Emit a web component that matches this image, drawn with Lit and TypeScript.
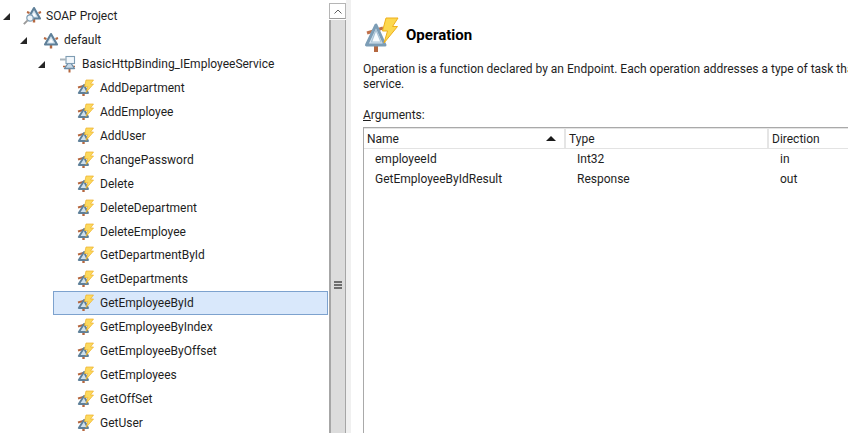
import { LitElement, html, css, svg } from "lit";
import { customElement } from "lit/decorators.js";

const triangle = svg`
  <path d="M1 6 L3.5 7 M12.5 7 L15 6" stroke="#b5673f" stroke-width="2" fill="none"/>
  <path d="M8 12 V16.5" stroke="#b5673f" stroke-width="2.4" fill="none"/>
  <path d="M8 2 L14 12.5 H2 Z" fill="#cfe0ec" stroke="#5f8099" stroke-width="2.1" stroke-linejoin="round"/>
  <path d="M8 6.6 L10.2 10.6 H5.8 Z" fill="#ffffff"/>`;

const opIcon = html`<svg class="icon" viewBox="0 0 18 18" width="18" height="18">
  <path d="M1 8.5 L9 6.2" stroke="#b5673f" stroke-width="1.9" fill="none"/>
  <path d="M6.5 13 V17" stroke="#b5673f" stroke-width="2.4" fill="none"/>
  <path d="M7 6 L1.8 14 H11 Z" fill="#cfe0ec" stroke="#5f8099" stroke-width="1.9" stroke-linejoin="round"/>
  <path d="M9 1 H16.5 L13.5 5 H16.5 L9 13.5 L10.8 7.5 H7.5 Z" fill="#fcd95e" stroke="#eeb02a" stroke-width=".7"/>
</svg>`;

const bigOp = html`<svg class="big" viewBox="0 0 36 36" width="36" height="36">
  <path d="M3 17 L19 12" stroke="#c0704a" stroke-width="3" fill="none"/>
  <path d="M12 29 V36" stroke="#b5673f" stroke-width="4" fill="none"/>
  <path d="M12 9 L2.5 29 H21 Z" fill="#d7e5f0" stroke="#7c9db6" stroke-width="3" stroke-linejoin="round"/>
  <path d="M12 14 L7.5 26 H17 Z" fill="#f7fbfe" stroke="#a9c3d6" stroke-width="1.2"/>
  <path d="M22 2 H34 L28.5 10.5 H33.5 L20 27 L23.5 15 H18.5 Z" fill="#fcd84f" stroke="#eeae1c" stroke-width="1"/>
</svg>`;

const projectIcon = html`<svg class="icon" viewBox="0 0 20 20" width="20" height="20">
  <g transform="translate(3,0)">${triangle}</g>
  <circle cx="7" cy="12" r="3.2" fill="#eef5fa" stroke="#7f9db3" stroke-width="1.2"/>
  <path d="M4.6 14.4 L0.8 18.2" stroke="#9a9a9a" stroke-width="1.9"/>
</svg>`;

const defaultIcon = html`<svg class="icon" viewBox="0 0 16 17" width="16" height="17">${triangle}</svg>`;

const bindingIcon = html`<svg class="icon" viewBox="0 0 18 18" width="18" height="18">
  <path d="M3 11.5 H15" stroke="#b5673f" stroke-width="1.5"/>
  <path d="M9.5 13 V17.5" stroke="#b5673f" stroke-width="2"/>
  <path d="M9.5 6 L14.5 13.5 H4.5 Z" fill="#c7d9e7" stroke="#6d8da6" stroke-width="1.3" stroke-linejoin="round"/>
  <rect x="6" y="1.5" width="8.5" height="7" fill="#f2f7fb" stroke="#7f9db3" stroke-width="1.1"/>
  <path d="M0 4.5 H6" stroke="#a9b4bc" stroke-width="2"/>
</svg>`;

const ops = [
  "AddDepartment", "AddEmployee", "AddUser", "ChangePassword", "Delete",
  "DeleteDepartment", "DeleteEmployee", "GetDepartmentById", "GetDepartments",
  "GetEmployeeById", "GetEmployeeByIndex", "GetEmployeeByOffset", "GetEmployees",
  "GetOffSet", "GetUser",
];

const expander = html`<svg class="exp" viewBox="0 0 7 7" width="7" height="7"><path d="M0 7 H7 V0 Z" fill="#262626"/></svg>`;

@customElement("app-root")
export class AppRoot extends LitElement {
  static styles = css`
    :host {
      display: flex;
      width: 848px;
      height: 433px;
      overflow: hidden;
      background: #fff;
      font-family: "Roboto", "Noto Sans", sans-serif;
      font-size: 12px;
      color: #1e1e1e;
    }
    .tree {
      width: 329px;
      flex: none;
      padding-top: 4.6px;
      box-sizing: border-box;
      overflow: hidden;
    }
    .row {
      display: flex;
      align-items: center;
      height: 23.9px;
      white-space: nowrap;
      box-sizing: border-box;
    }
    .exp { flex: none; }
    .l0 { padding-left: 3px; padding-bottom: 1px; }
    .l1 { padding-left: 20px; }
    .l2 { padding-left: 38px; }
    .l3 { padding-left: 77px; }
    .row .icon { flex: none; margin-right: 5px; }
    .l0 .exp { margin-right: 13px; }
    .l0 .icon { margin-right: 3px; }
    .l1 .exp { margin-right: 16px; }
    .l1 .icon { margin-right: 5px; }
    .l2 .exp { margin-right: 15px; }
    .l2 .icon { margin-right: 4px; }
    .row.sel {
      margin-left: 53px;
      width: 275px;
      background: #d9e8fb;
      border: 1px solid #7da2ce;
      padding-left: 23px;
    }
    .scroll {
      width: 17px;
      flex: none;
      display: flex;
      flex-direction: column;
      padding-top: 3px;
      box-sizing: border-box;
    }
    .sb-btn {
      height: 16px;
      border: 1px solid #b5b5b5;
      border-bottom: 1px solid #9c9c9c;
      box-sizing: border-box;
      background: #fff;
      display: flex;
      align-items: center;
      justify-content: center;
    }
    .thumb {
      flex: 1;
      background: #dcdcdc;
      border-left: 2px solid #a6a6a6;
      border-right: 1px solid #a6a6a6;
      display: flex;
      align-items: center;
      justify-content: center;
      margin-top: 1px;
      padding-top: 116px;
      box-sizing: border-box;
    }
    .grip { display: flex; flex-direction: column; gap: 1px; }
    .grip i { display: block; width: 8px; height: 2px; background: #6e6e6e; }
    .strip { width: 5px; flex: none; background: #f0f0f0; }
    .main {
      flex: 1;
      min-width: 0;
      padding: 15px 0 0 12px;
      display: flex;
      flex-direction: column;
      overflow: hidden;
    }
    .head { display: flex; align-items: center; gap: 6px; height: 38px; margin-left: 1px; }
    .title { font-size: 15px; font-weight: 700; color: #000; margin-top: 1px; }
    .desc { margin: 9px 0 0; line-height: 15px; }
    .desc span { white-space: nowrap; display: block; }
    .args { margin-top: 15px; line-height: 16px; }
    .args u { text-decoration: underline; }
    .table {
      margin-top: 4px;
      flex: 1;
      width: 600px;
      border: 1px solid #a9a9a9;
      border-right: none;
      border-bottom: none;
      box-sizing: border-box;
    }
    .thead {
      display: grid;
      grid-template-columns: 202px 203px 1fr;
      height: 21px;
      border-top: 1px solid #e4e4e4;
      border-bottom: 1px solid #e3e3e3;
      box-sizing: border-box;
    }
    .th {
      display: flex;
      align-items: center;
      justify-content: space-between;
      padding: 0 8px 0 3px;
      border-right: 2px solid #e5e5e5;
      box-sizing: border-box;
    }
    .th:last-child { border-right: none; }
    .arrow { width: 0; height: 0; border: 5px solid transparent; border-top: 0; border-bottom: 5px solid #1a1a1a; }
    .tr {
      display: grid;
      grid-template-columns: 202px 203px 1fr;
      height: 20px;
      align-items: center;
    }
    .tr > div { padding-left: 11px; white-space: nowrap; }
  `;

  render() {
    return html`
      <div class="tree">
        <div class="row l0">${expander}${projectIcon}<span>SOAP Project</span></div>
        <div class="row l1">${expander}${defaultIcon}<span>default</span></div>
        <div class="row l2">${expander}${bindingIcon}<span>BasicHttpBinding_IEmployeeService</span></div>
        ${ops.map(
          (o) => html`<div class="row l3 ${o === "GetEmployeeById" ? "sel" : ""}">${opIcon}<span>${o}</span></div>`
        )}
      </div>
      <div class="scroll">
        <div class="sb-btn">
          <svg viewBox="0 0 8 5" width="8" height="5"><path d="M.5 4.5 L4 1 L7.5 4.5" fill="none" stroke="#606060" stroke-width="1"/></svg>
        </div>
        <div class="thumb"><div class="grip"><i></i><i></i><i></i></div></div>
      </div>
      <div class="strip"></div>
      <div class="main">
        <div class="head">${bigOp}<span class="title">Operation</span></div>
        <div class="desc">
          <span>Operation is a function declared by an Endpoint. Each operation addresses a type of task that can be performed by the</span>
          <span>service.</span>
        </div>
        <div class="args"><u>A</u>rguments:</div>
        <div class="table">
          <div class="thead">
            <div class="th">Name<span class="arrow"></span></div>
            <div class="th">Type</div>
            <div class="th">Direction</div>
          </div>
          <div>
            <div class="tr"><div>employeeId</div><div>Int32</div><div>in</div></div>
            <div class="tr"><div>GetEmployeeByIdResult</div><div>Response</div><div>out</div></div>
          </div>
        </div>
      </div>
    `;
  }
}
